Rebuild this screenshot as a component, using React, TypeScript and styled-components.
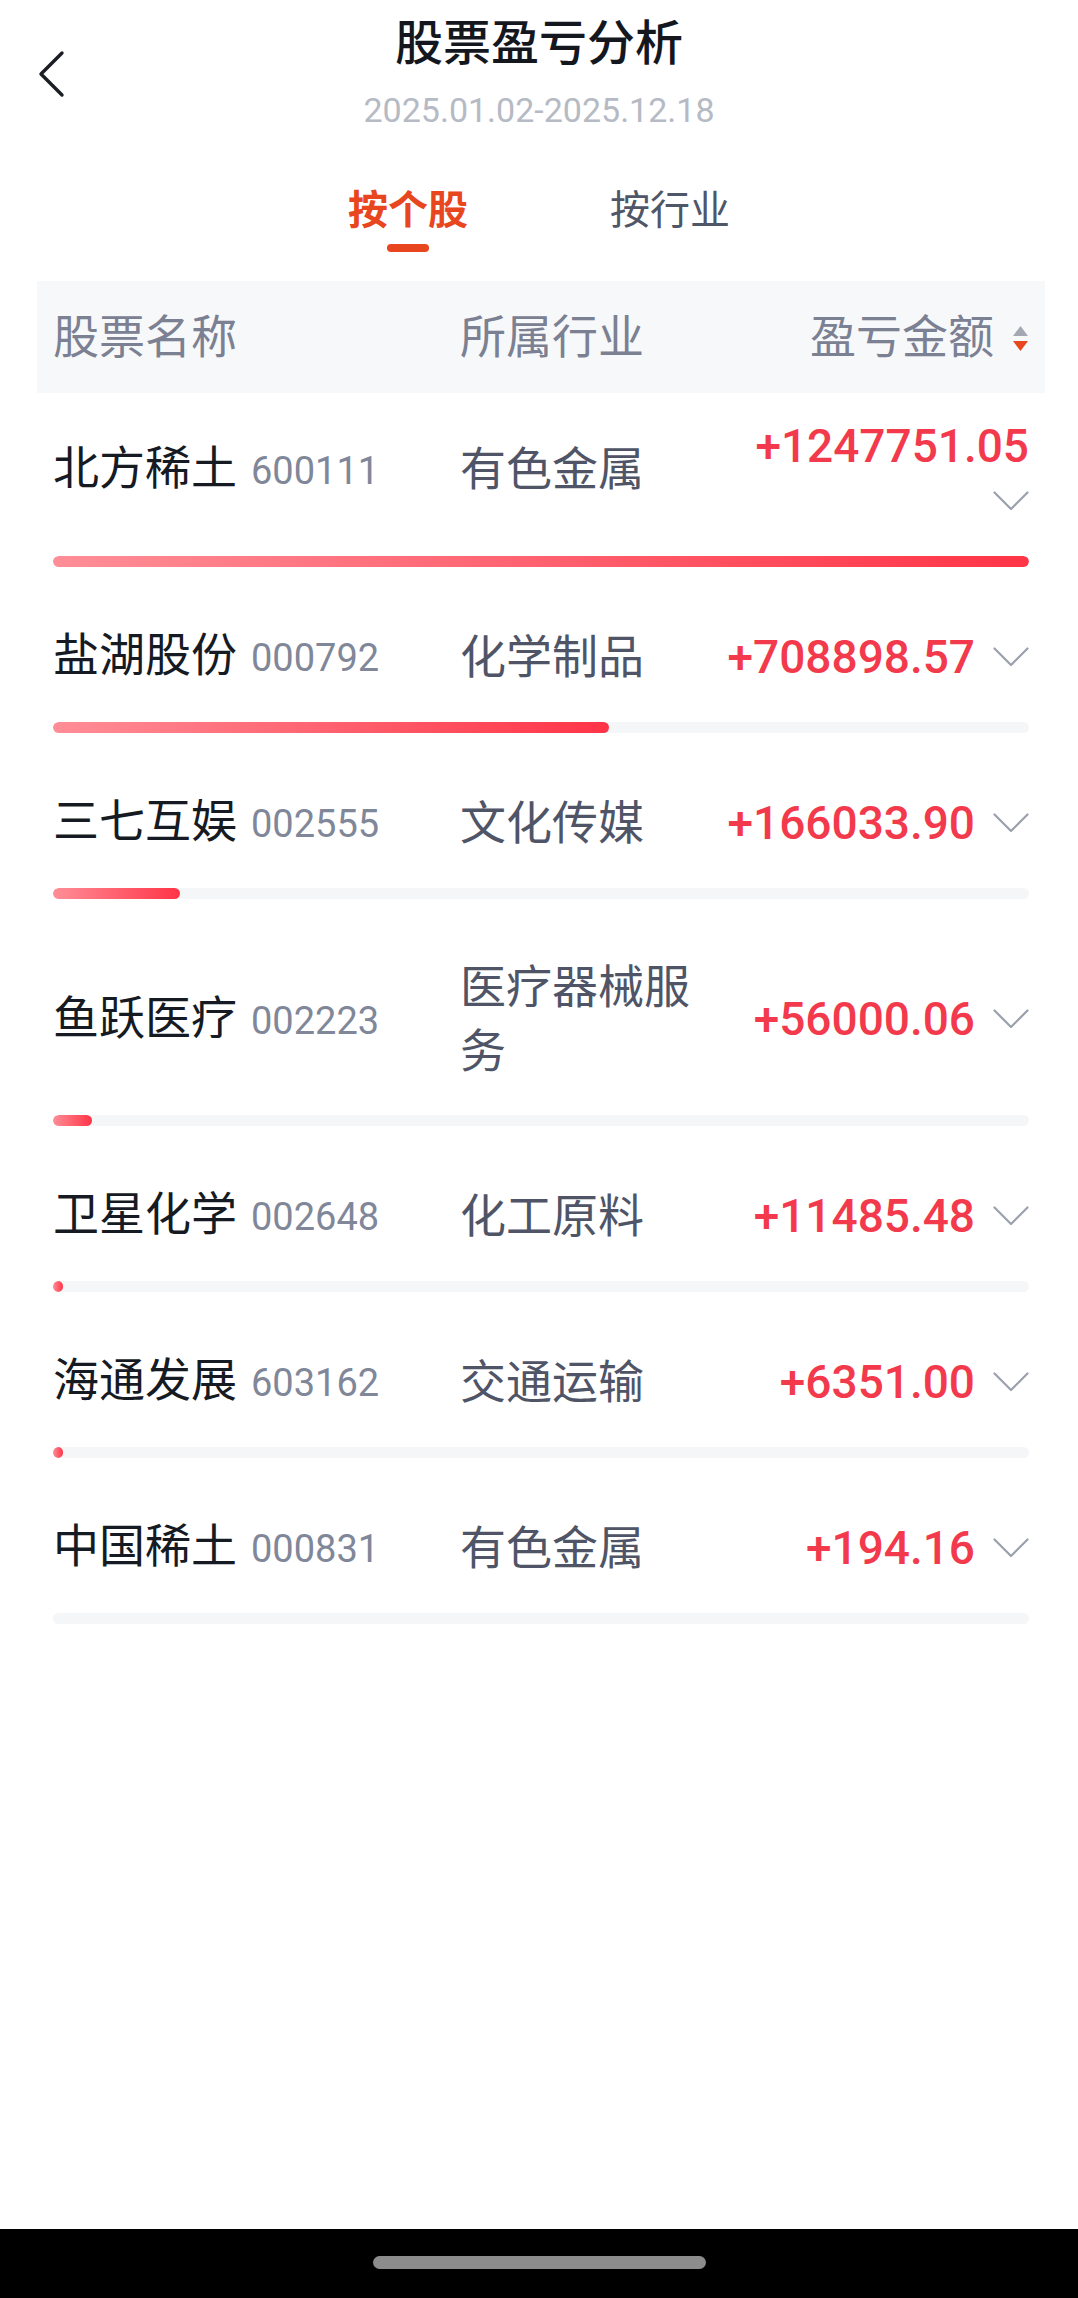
import styled, { createGlobalStyle } from 'styled-components'

const GlobalStyle = createGlobalStyle`
    html, body {
        margin: 0;
        padding: 0;
        background: #ffffff;
    }
    body {
        font-family: Roboto, "Noto Sans CJK SC", sans-serif;
        -webkit-font-smoothing: antialiased;
    }
    * {
        box-sizing: border-box;
    }
`

type Stock = {
    name: string
    code: string
    industry: string
    amount: number
}

const stocks: Array<Stock> = [
    { name: '北方稀土', code: '600111', industry: '有色金属', amount: 1247751.05 },
    { name: '盐湖股份', code: '000792', industry: '化学制品', amount: 708898.57 },
    { name: '三七互娱', code: '002555', industry: '文化传媒', amount: 166033.9 },
    { name: '鱼跃医疗', code: '002223', industry: '医疗器械服务', amount: 56000.06 },
    { name: '卫星化学', code: '002648', industry: '化工原料', amount: 11485.48 },
    { name: '海通发展', code: '603162', industry: '交通运输', amount: 6351.0 },
    { name: '中国稀土', code: '000831', industry: '有色金属', amount: 194.16 },
]

const maxAmount = Math.max(...stocks.map(s => Math.abs(s.amount)))

const formatAmount = (value: number): string => (value >= 0 ? '+' : '-') + Math.abs(value).toFixed(2)

// bar width is a whole percent of the biggest amount
const barPercent = (value: number): number => Math.round((Math.abs(value) / maxAmount) * 100)

function BackIcon() {
    return (
        <svg width="28" height="48" viewBox="0 0 28 48" fill="none">
            <path d="M24 3 L3 24 L24 45" stroke="#1b1e25" strokeWidth="3.4" strokeLinecap="round" strokeLinejoin="round" />
        </svg>
    )
}

function ChevronDown() {
    return (
        <svg width="36" height="46" viewBox="0 0 36 46" fill="none">
            <path d="M1.5 14.5 L18 31 L34.5 14.5" stroke="#9aa0ac" strokeWidth="2.2" strokeLinecap="round" strokeLinejoin="round" />
        </svg>
    )
}

function SortIcon() {
    return (
        <svg width="17" height="28" viewBox="0 0 17 28" fill="none">
            <path d="M8.5 1 L16 11 L1 11 Z" fill="#a3a8b3" strokeLinejoin="round" />
            <path d="M1 16 L16 16 L8.5 26 Z" fill="#e8461e" strokeLinejoin="round" />
        </svg>
    )
}

function App() {
    return (
        <Page>
            <GlobalStyle />
            <Main>
                <NavBar>
                    <BackButton><BackIcon /></BackButton>
                    <TitleBlock>
                        <Title>股票盈亏分析</Title>
                        <DateRange>2025.01.02-2025.12.18</DateRange>
                    </TitleBlock>
                    <div />
                </NavBar>

                <Tabs>
                    <Tab active>
                        <span>按个股</span>
                        <TabLine active />
                    </Tab>
                    <Tab>
                        <span>按行业</span>
                        <TabLine />
                    </Tab>
                </Tabs>

                <Table>
                    <HeaderRow>
                        <HeaderCell>股票名称</HeaderCell>
                        <HeaderCell>所属行业</HeaderCell>
                        <HeaderCell align="right">
                            盈亏金额
                            <SortWrap><SortIcon /></SortWrap>
                        </HeaderCell>
                    </HeaderRow>

                    {stocks.map(stock => (
                        <Row key={stock.code}>
                            <RowGrid>
                                <NameCell>
                                    <StockName>{stock.name}</StockName>
                                    <StockCode>{stock.code}</StockCode>
                                </NameCell>
                                <Industry>{stock.industry}</Industry>
                                <AmountCell>
                                    <Amount>{formatAmount(stock.amount)}</Amount>
                                    <ChevronWrap><ChevronDown /></ChevronWrap>
                                </AmountCell>
                            </RowGrid>
                            <Track>
                                <Fill style={{ width: `${barPercent(stock.amount)}%` }} />
                            </Track>
                        </Row>
                    ))}
                </Table>
            </Main>
            <SystemBar>
                <HomeIndicator />
            </SystemBar>
        </Page>
    )
}

const Page = styled.div`
    min-height: 100vh;
    display: flex;
    flex-direction: column;
    background: #ffffff;
`

const Main = styled.div`
    flex: 1;
`

const NavBar = styled.div`
    display: grid;
    grid-template-columns: 1fr auto 1fr;
    align-items: center;
    padding-top: 14px;
`

const BackButton = styled.div`
    display: flex;
    align-items: center;
    padding-left: 38px;
    padding-top: 4px;
`

const TitleBlock = styled.div`
    display: flex;
    flex-direction: column;
    align-items: center;
`

const Title = styled.div`
    font-size: 48px;
    line-height: 60px;
    font-weight: 500;
    color: #14171e;
`

const DateRange = styled.div`
    margin-top: 16px;
    font-size: 34px;
    line-height: 40px;
    color: #b5bac4;
`

const Tabs = styled.div`
    display: flex;
    justify-content: center;
    gap: 142px;
    margin-top: 53px;
`

const Tab = styled.div<{ active?: boolean }>`
    display: flex;
    flex-direction: column;
    align-items: center;
    span {
        font-size: 40px;
        line-height: 56px;
        font-weight: ${p => (p.active ? 600 : 400)};
        color: ${p => (p.active ? '#e8461e' : '#4f5667')};
    }
`

const TabLine = styled.div<{ active?: boolean }>`
    width: 42px;
    height: 8px;
    margin-top: 5px;
    border-radius: 4px;
    background: ${p => (p.active ? '#e8461e' : 'transparent')};
`

const Table = styled.div`
    margin: 29px 33px 0 37px;
`

const HeaderRow = styled.div`
    display: grid;
    grid-template-columns: 407px 258px 1fr;
    align-items: center;
    height: 112px;
    padding: 0 16px;
    background: #f7f8fa;
`

const HeaderCell = styled.div<{ align?: 'left' | 'right' }>`
    display: flex;
    align-items: center;
    justify-content: ${p => (p.align === 'right' ? 'flex-end' : 'flex-start')};
    font-size: 46px;
    line-height: 64px;
    color: #7b8192;
`

const SortWrap = styled.span`
    display: flex;
    margin-left: 18px;
    margin-top: 4px;
`

const Row = styled.div`
    padding: 21px 16px 35px;
`

const RowGrid = styled.div`
    display: grid;
    grid-template-columns: 407px 258px 1fr;
    align-items: center;
`

const NameCell = styled.div`
    display: flex;
    align-items: baseline;
    line-height: 64px;
`

const StockName = styled.span`
    font-size: 46px;
    color: #161a22;
`

const StockCode = styled.span`
    margin-left: 14px;
    font-size: 38px;
    color: #7f8799;
`

const Industry = styled.div`
    font-size: 46px;
    line-height: 64px;
    color: #4f5567;
`

const AmountCell = styled.div`
    display: flex;
    flex-wrap: wrap;
    justify-content: flex-end;
    align-items: center;
`

const Amount = styled.span`
    font-size: 46px;
    line-height: 64px;
    font-weight: 500;
    color: #f23a4c;
    white-space: nowrap;
`

const ChevronWrap = styled.span`
    display: flex;
    margin-left: 18px;
`

const Track = styled.div`
    margin-top: 32px;
    height: 11px;
    border-radius: 6px;
    background: #f5f6f8;
    overflow: hidden;
`

const Fill = styled.div`
    height: 100%;
    border-radius: 6px;
    background: linear-gradient(90deg, #ff8e97 0%, #ff3447 100%);
`

const SystemBar = styled.div`
    height: 69px;
    background: #000000;
    display: flex;
    justify-content: center;
    padding-top: 27px;
`

const HomeIndicator = styled.div`
    width: 333px;
    height: 13px;
    border-radius: 7px;
    background: #8c8c8c;
`

export default App
